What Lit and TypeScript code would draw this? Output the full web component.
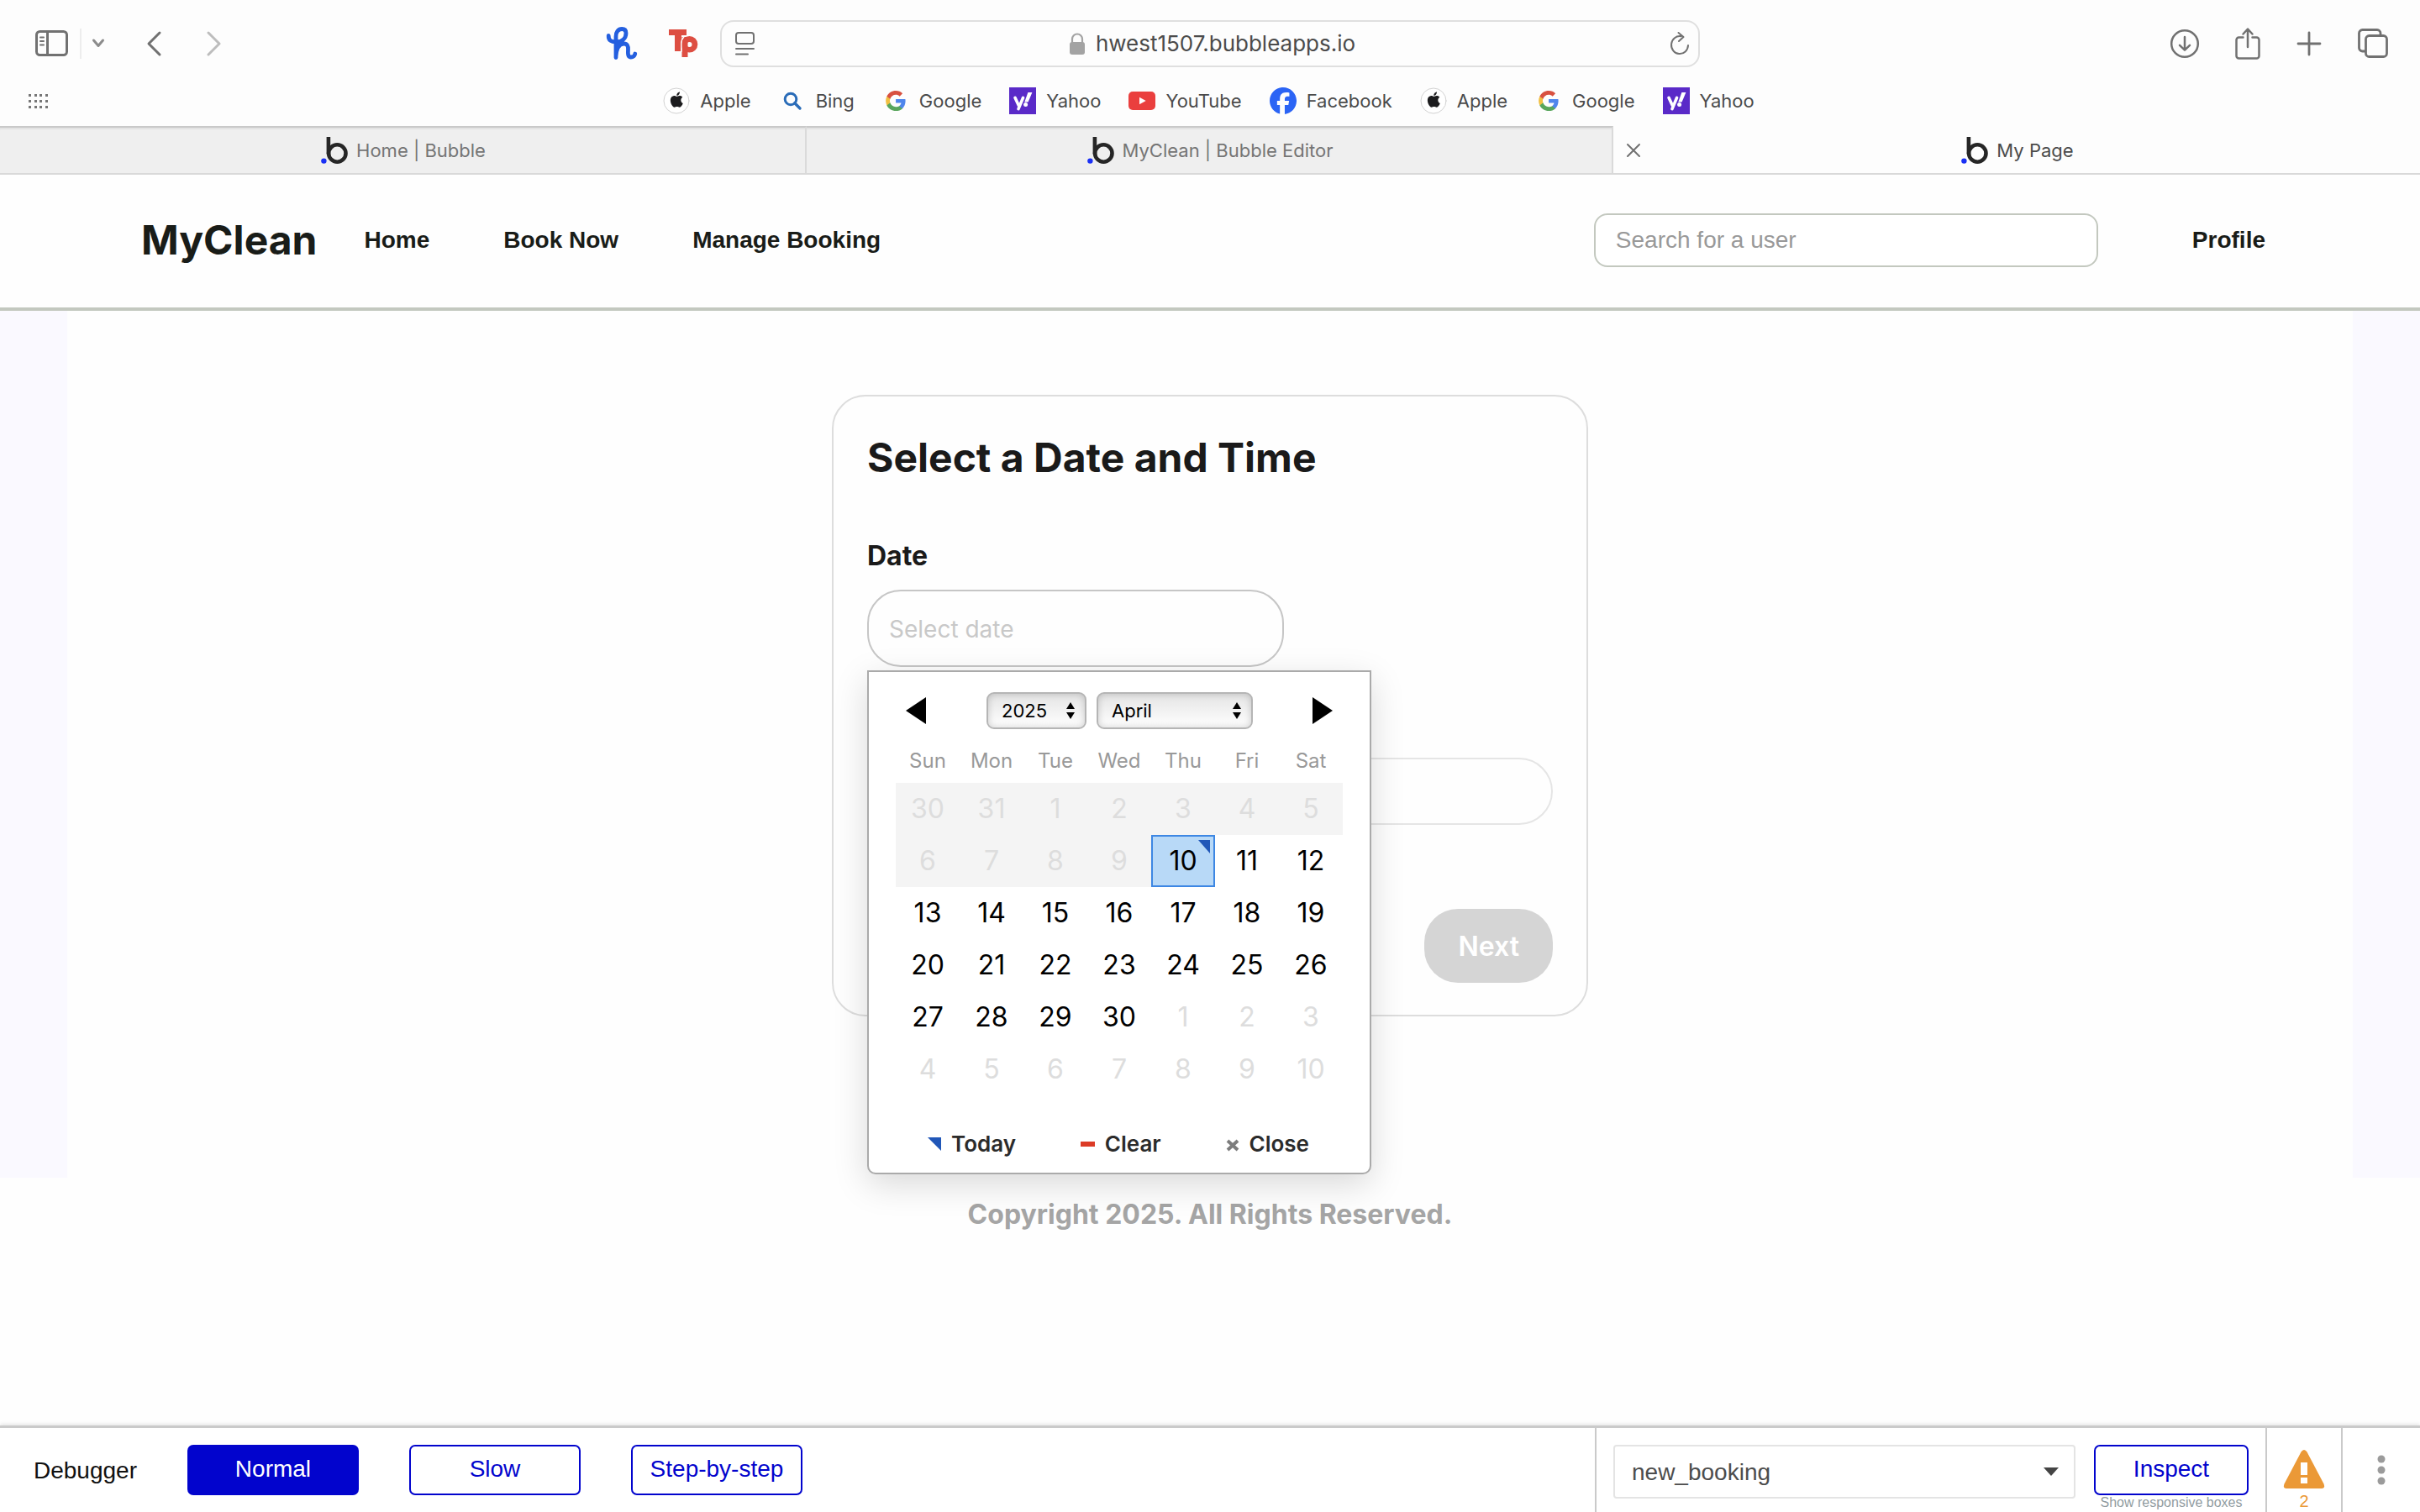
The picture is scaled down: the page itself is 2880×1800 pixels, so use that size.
import { LitElement, html, css, svg, nothing } from "lit";
import { customElement, state } from "lit/decorators.js";
import { classMap } from "lit/directives/class-map.js";

const APPLE = "M12.152 6.896c-.948 0-2.415-1.078-3.96-1.04-2.04.027-3.91 1.183-4.961 3.014-2.117 3.675-.546 9.103 1.519 12.09 1.013 1.454 2.208 3.09 3.792 3.039 1.52-.065 2.09-.987 3.935-.987 1.831 0 2.35.987 3.96.948 1.637-.026 2.676-1.48 3.676-2.948 1.156-1.688 1.636-3.325 1.662-3.415-.039-.013-3.182-1.221-3.22-4.857-.026-3.04 2.48-4.494 2.597-4.559-1.429-2.09-3.623-2.324-4.39-2.376-2-.156-3.675 1.09-4.61 1.09zM15.53 3.83c.843-1.012 1.4-2.427 1.245-3.83-1.207.052-2.662.805-3.532 1.818-.78.896-1.454 2.338-1.273 3.714 1.338.104 2.715-.688 3.559-1.701";
const FACEBOOK = "M9.101 23.691v-7.98H6.627v-3.667h2.474v-1.58c0-4.085 1.848-5.978 5.858-5.978.401 0 .955.042 1.468.103a8.68 8.68 0 0 1 1.141.195v3.325a8.623 8.623 0 0 0-.653-.036 26.805 26.805 0 0 0-.733-.009c-.707 0-1.259.096-1.675.309a1.686 1.686 0 0 0-.679.622c-.258.42-.374.995-.374 1.752v1.297h3.919l-.386 2.103-.287 1.564h-3.246v8.245C19.396 23.238 24 18.179 24 12.044c0-6.627-5.373-12-12-12s-12 5.373-12 12c0 5.628 3.874 10.35 9.101 11.647Z";

const siteIcons: Record<string, unknown> = {
  Apple: svg`<circle cx="16" cy="16" r="15" fill="#fff" stroke="#d2d2d2" stroke-width="1"/><g transform="translate(7.200 5.600) scale(0.76)"><path d=${APPLE} fill="#1c1c1e"/></g>`,
  Bing: svg`<circle cx="14" cy="14" r="6.800" fill="none" stroke="#2a6cb8" stroke-width="3"/><path d="M18.800 18.800L25 25" stroke="#2a6cb8" stroke-width="3.400" stroke-linecap="round"/>`,
  Google: svg`<g transform="translate(3 3) scale(1.090)"><path fill="#4f86ec" d="M22.56 12.25c0-.78-.07-1.53-.2-2.25H12v4.26h5.92c-.26 1.37-1.04 2.53-2.21 3.31v2.77h3.57c2.08-1.92 3.28-4.74 3.28-8.09z"/><path fill="#58a65c" d="M12 23c2.97 0 5.46-.98 7.28-2.66l-3.57-2.77c-.98.66-2.23 1.06-3.71 1.06-2.86 0-5.29-1.93-6.16-4.53H2.18v2.84C3.99 20.53 7.7 23 12 23z"/><path fill="#f1bf42" d="M5.84 14.09c-.22-.66-.35-1.36-.35-2.09s.13-1.43.35-2.09V7.07H2.18C1.43 8.55 1 10.22 1 12s.43 3.45 1.18 4.93l2.85-2.22.81-.62z"/><path fill="#d85140" d="M12 5.38c1.62 0 3.06.56 4.21 1.64l3.15-3.15C17.45 2.09 14.97 1 12 1 7.7 1 3.99 3.47 2.18 7.07l3.66 2.84c.87-2.6 3.3-4.53 6.16-4.53z"/></g>`,
  Yahoo: svg`<rect width="32" height="32" fill="#5a2ac8"/><path d="M7 12.300L11.300 21.600M16.600 12.300L11 25.600" stroke="#fff" stroke-width="3.600" fill="none"/><path d="M22.400 6h5l-4.800 11.500h-4.300z" fill="#fff"/><circle cx="19.600" cy="20.400" r="2.500" fill="#fff"/>`,
  YouTube: svg`<rect y="5" width="32" height="22" rx="5" fill="#ea3f3e"/><path d="M13 11.700v8.600l7.700-4.300z" fill="#fff"/>`,
  Facebook: svg`<g transform="scale(1.334)"><path d=${FACEBOOK} fill="#2b64f5"/></g>`,
};

const bookmarks = ["Apple", "Bing", "Google", "Yahoo", "YouTube", "Facebook", "Apple", "Google", "Yahoo"];

const bubbleMark = html`<svg class="mark" viewBox="0 0 32 32" aria-hidden="true">
  <path d="M8.900 0v20.500" stroke="#262626" stroke-width="4.600" fill="none"/>
  <circle cx="19.300" cy="19.500" r="10.200" fill="none" stroke="#262626" stroke-width="4.600"/>
  <circle cx="3.400" cy="28.600" r="3.200" fill="#1a30f5"/>
</svg>`;

@customElement("browser-chrome")
class BrowserChrome extends LitElement {
  static styles = css`
    :host { display: block; background: #fdfdfd; color: #4b4b4b; font: 22px/32px Inter, sans-serif; }
    button { border: 0; padding: 0; background: none; display: flex; }
    svg { display: block; fill: none; stroke: #717171; stroke-linecap: round; stroke-linejoin: round; }
    a { color: inherit; text-decoration: none; }
    .toolbar { display: grid; grid-template-columns: 1fr minmax(0, 1166px) 1fr; align-items: center; padding-top: 24px; }
    .group { display: flex; align-items: center; }
    .left { padding: 0 26px 0 41px; }
    .divider { width: 2px; height: 36px; margin: 0 12px; background: #ededed; }
    .back { margin-left: 48px; }
    .forward { margin-left: 52px; }
    .extensions { display: flex; gap: 36px; margin-left: auto; }
    .right { justify-content: flex-end; gap: 41px; padding-right: 37px; }
    .address { display: flex; align-items: center; height: 56px; box-sizing: border-box; padding: 0 9px 0 16px; border: 2px solid #dfdfdf; border-radius: 16px; }
    .location { flex: 1; display: flex; align-items: center; justify-content: center; gap: 12px; font-size: 26px; }
    .bookmarks { display: grid; grid-template-columns: 1fr auto 1fr; align-items: center; height: 70px; box-sizing: border-box; padding: 9px 0 0 33px; }
    .bookmarks nav { display: flex; gap: 33px; padding-right: 36px; }
    .bookmark { display: flex; gap: 12px; }
    .site { stroke: none; width: 32px; height: 32px; }
    .tabs { display: grid; grid-template-columns: repeat(3, 1fr); border-bottom: 2px solid #d9d9d9; }
    .tab { display: grid; grid-template-columns: 1fr auto 1fr; align-items: center; height: 56px; box-sizing: border-box; }
    .tab.idle { background: #efefef; color: #757575; border-right: 2px solid #dadada; border-top: 2px solid #c9c9c9; box-shadow: inset 0 3px 3px -2px #00000018; }
    .title { grid-column: 2; display: flex; align-items: center; gap: 10px; padding: 2px 0 0 2px; }
    .idle .title { padding-top: 0; }
    .mark { width: 32px; height: 32px; stroke: none; stroke-linecap: butt; }
    .close { margin-left: 14px; }
  `;

  private tab(title: string, active: boolean) {
    return html`<div class=${classMap({ tab: true, idle: !active })}>
      ${active
        ? html`<button class="close" aria-label="Close tab"><svg width="20" height="22" stroke-width="2"><path d="M3 5L17 19M17 5L3 19"/></svg></button>`
        : nothing}
      <a class="title" href="#">${bubbleMark}<span>${title}</span></a>
    </div>`;
  }

  render() {
    return html`
      <div class="toolbar">
        <div class="group left">
          <button aria-label="Sidebar"><svg width="42" height="34" stroke-width="3"><rect x="2.500" y="2.500" width="36" height="28" rx="4"/><path d="M15.500 3V30"/><path d="M7 9.500h4M7 14h4M7 18.500h4" stroke-width="2"/></svg></button>
          <span class="divider"></span>
          <button aria-label="Tab groups"><svg width="16" height="14" viewBox="0 0 16 14"><path d="M2.500 3l5.500 6.500L13.500 3" stroke="#8c8c8c" stroke-width="3"/></svg></button>
          <button class="back" aria-label="Back"><svg width="20" height="32" stroke-width="3"><path d="M17 3L4 16l13 13"/></svg></button>
          <button class="forward" aria-label="Forward"><svg width="20" height="32" viewBox="0 0 20 32"><path d="M3 3l13 13L3 29" stroke="#bdbdbd" stroke-width="3"/></svg></button>
          <div class="extensions">
            <button aria-label="Honey"><svg width="38" height="40" viewBox="0 0 38 40"><path d="M3.200 10.500C3 16 6.500 18.200 12.500 18c7-.300 11.500-4.500 11.500-10.500 0-3.400-2-5-4.800-5C14.500 2.500 12 6 12 11.500V36.500M12 35c.500-7 3-15 9.500-15 4 0 5.200 3 5 7-.200 3.500-.700 8.800 3 9 3 .200 5-2 5.300-4" stroke="#245fdf" stroke-width="4.800"/></svg></button>
            <button aria-label="Teachers extension"><svg width="36" height="38" viewBox="0 0 36 38" stroke-linejoin="miter"><g stroke="none" fill="#dd4e42"><path d="M1 3h21v7h-6v19H8V10H1z"/><path d="M16.500 12h7v24h-7z"/><path fill-rule="evenodd" d="M25.500 11a9.800 9.800 0 1 1 0 19.600 9.800 9.800 0 0 1 0-19.600zm0 7a3 3 0 1 0 0 6 3 3 0 0 0 0-6z"/></g><path d="M15.800 29.500V20q0-5 3-8" stroke="#fdfdfd" stroke-width="1.500"/></svg></button>
          </div>
        </div>
        <div class="address">
          <button aria-label="Reader"><svg width="24" height="30" stroke-width="2"><rect x="1" y="2" width="21" height="13" rx="3"/><path d="M1 21h21M1 27.500h14"/></svg></button>
          <span class="location"><svg width="20" height="28" viewBox="0 0 20 28"><rect x="1" y="12" width="18" height="15" rx="3" fill="#a3a3a3" stroke="none"/><path d="M4 13V8.500a6 6 0 0 1 12 0V13" stroke="#a3a3a3" stroke-width="2.200"/></svg>hwest1507.bubbleapps.io</span>
          <button aria-label="Reload"><svg width="26" height="30" stroke-width="2"><path d="M14.500 6.200A10 10.500 0 1 0 23 17M11.500 2l6 5-5.500 5"/></svg></button>
        </div>
        <div class="group right">
          <button aria-label="Downloads"><svg width="36" height="36" stroke-width="2.500"><circle cx="18" cy="18" r="15.800"/><path d="M18 10v15.500M12 19.800l6 5.800 6-5.800"/></svg></button>
          <button aria-label="Share"><svg width="32" height="40" stroke-width="2.500"><path d="M10.500 12.500H5.500a3 3 0 0 0-3 3V34.500a3 3 0 0 0 3 3H26.500a3 3 0 0 0 3-3V15.500a3 3 0 0 0-3-3H21.500M16 24V3M10.500 8.500L16 2.500l5.500 6"/></svg></button>
          <button aria-label="New tab"><svg width="32" height="32" stroke-width="2.800"><path d="M16 3v26M3 16h26"/></svg></button>
          <button aria-label="Show tabs"><svg width="38" height="38" stroke-width="2.800"><rect x="10.500" y="9.500" width="25" height="25" rx="4"/><path d="M9 28H6.500a4 4 0 0 1-4-4V6.500a4 4 0 0 1 4-4H24a4 4 0 0 1 4 4V9"/></svg></button>
        </div>
      </div>
      <div class="bookmarks">
        <button aria-label="Favourites"><svg width="26" height="20" viewBox="0 0 26 20">${[2, 9, 16].map((y) => [1, 8, 14, 21].map((x) => svg`<rect x=${x} y=${y} width="3" height="3" fill="#777" stroke="none"/>`))}</svg></button>
        <nav>${bookmarks.map((name) => html`<a class="bookmark" href="#"><svg class="site" viewBox="0 0 32 32" aria-hidden="true">${siteIcons[name]}</svg>${name}</a>`)}</nav>
      </div>
      <div class="tabs">${this.tab("Home | Bubble", false)}${this.tab("MyClean | Bubble Editor", false)}${this.tab("My Page", true)}</div>
    `;
  }
}

@customElement("site-header")
class SiteHeader extends LitElement {
  static styles = css`
    :host { display: flex; align-items: center; height: 156px; padding: 0 184px 2px 168px; border-bottom: 4px solid #c3c8bf; background: #fefefe; font: bold 28px/34px "Liberation Sans", sans-serif; color: #191c18; }
    a { color: inherit; text-decoration: none; }
    .brand { font: 700 48px/58px Inter, sans-serif; margin-right: 56px; }
    nav { display: flex; gap: 88px; }
    .search { flex: 0 1 600px; height: 64px; box-sizing: border-box; margin: 0 112px 0 auto; padding: 0 24px; border: 2px solid #c3c8bf; border-radius: 16px; background: #fff; font: 28px "Liberation Sans", sans-serif; }
    .search::placeholder { color: #999; opacity: 1; }
  `;
  render() {
    return html`
      <a class="brand" href="#">MyClean</a>
      <nav><a href="#">Home</a><a href="#">Book Now</a><a href="#">Manage Booking</a></nav>
      <input class="search" type="search" placeholder="Search for a user" aria-label="Search for a user">
      <a href="#">Profile</a>
    `;
  }
}

const MONTHS = ["January", "February", "March", "April", "May", "June", "July", "August", "September", "October", "November", "December"];
const WEEKDAYS = ["Sun", "Mon", "Tue", "Wed", "Thu", "Fri", "Sat"];
const TODAY = new Date(2025, 3, 10);

@customElement("date-picker")
class DatePicker extends LitElement {
  @state() private year = 2025;
  @state() private month = 3;

  static styles = css`
    :host { display: block; box-sizing: border-box; width: 600px; padding: 24px 32px 14px; border: 2px solid #aaa; border-radius: 0 0 10px 10px; background: #fff; box-shadow: 0 12px 40px #00000026; font: 32px/40px Inter, sans-serif; color: #000; }
    button { border: 0; padding: 0; background: none; color: inherit; font: inherit; }
    svg { display: block; }
    .head { display: flex; align-items: center; gap: 12px; padding: 0 12px; }
    .next { margin-left: auto; }
    .year { margin-left: 60px; width: 119px; }
    .month { width: 186px; }
    .picker { position: relative; display: flex; }
    .picker select { appearance: none; width: 100%; height: 44px; padding: 0 16px; border: 2px solid #b5b5b5; border-radius: 9px; background: linear-gradient(#e4e4e4, #fff); box-shadow: inset 0 0 8px #00000030; color: #000; font: 22px Inter, sans-serif; }
    .picker svg { position: absolute; right: 13px; top: 12px; pointer-events: none; }
    table { width: 532px; margin-top: 16px; border-collapse: collapse; table-layout: fixed; }
    th { height: 44px; padding: 0 0 4px; font-size: 24px; font-weight: 400; line-height: 40px; color: #999; }
    td { padding: 0; }
    .day { position: relative; display: block; width: 100%; height: 62px; box-sizing: border-box; }
    .off { color: #ddd; }
    .past { background: #f4f4f4; }
    .today { background: #b8d9f7; border: 2px solid #3d87e3; }
    .today::after { content: ""; position: absolute; top: 4px; right: 4px; border-top: 16px solid #2157b8; border-left: 14px solid transparent; }
    .actions { display: flex; justify-content: space-between; padding: 0 40px 0 38px; margin-top: 38px; }
    .action { display: flex; align-items: center; gap: 12px; font-size: 26px; font-weight: 600; line-height: 40px; color: #2b2b2b; }
  `;

  private shift(step: number) {
    const next = new Date(this.year, this.month + step, 1);
    this.year = next.getFullYear();
    this.month = next.getMonth();
  }

  private weeks() {
    const lead = new Date(this.year, this.month, 1).getDay();
    return Array.from({ length: 6 }, (_, w) => Array.from({ length: 7 }, (_, d) => new Date(this.year, this.month, 1 - lead + w * 7 + d)));
  }

  private cell(date: Date) {
    const past = date < TODAY;
    const off = past || date.getMonth() !== this.month;
    const today = date.getTime() === TODAY.getTime();
    return html`<td><button class=${classMap({ day: true, past, off, today })} ?disabled=${off}>${date.getDate()}</button></td>`;
  }

  render() {
    const arrows = html`<svg width="12" height="20" viewBox="0 0 12 20" aria-hidden="true"><path d="M6 0l5 8H1zM6 20l5-8H1z"/></svg>`;
    return html`
      <div class="head">
        <button aria-label="Previous month" @click=${() => this.shift(-1)}><svg width="24" height="32"><path d="M24 0v32L0 16z"/></svg></button>
        <span class="picker year"><select aria-label="Year" @change=${(e: Event) => (this.year = +(e.target as HTMLSelectElement).value)}>${[2025, 2026, 2027].map((y) => html`<option ?selected=${y === this.year}>${y}</option>`)}</select>${arrows}</span>
        <span class="picker month"><select aria-label="Month" @change=${(e: Event) => (this.month = (e.target as HTMLSelectElement).selectedIndex)}>${MONTHS.map((m, i) => html`<option ?selected=${i === this.month}>${m}</option>`)}</select>${arrows}</span>
        <button class="next" aria-label="Next month" @click=${() => this.shift(1)}><svg width="24" height="32"><path d="M0 0v32l24-16z"/></svg></button>
      </div>
      <table>
        <thead><tr>${WEEKDAYS.map((d) => html`<th scope="col">${d}</th>`)}</tr></thead>
        <tbody>${this.weeks().map((week) => html`<tr>${week.map((d) => this.cell(d))}</tr>`)}</tbody>
      </table>
      <div class="actions">
        <button class="action"><svg width="16" height="20"><path d="M0 2h16v16z" fill="#2157b8"/></svg>Today</button>
        <button class="action"><svg width="17" height="20"><path d="M0 7h17v6H0z" fill="#dc3b26"/></svg>Clear</button>
        <button class="action"><svg width="16" height="20"><path d="M2 6l12 11M14 6L2 17" stroke="#7d7d7d" stroke-width="4"/></svg>Close</button>
      </div>
    `;
  }
}

@customElement("debugger-bar")
class DebuggerBar extends LitElement {
  static styles = css`
    :host { display: flex; height: 100px; border-top: 3px solid #cacaca; box-shadow: 0 -2px 4px #00000018; background: #fff; font: 28px/32px "Liberation Sans", sans-serif; color: #111; }
    svg { display: block; }
    button { font: inherit; }
    .speeds { flex: 1; display: flex; align-items: flex-start; gap: 60px; padding: 20px 0 0 40px; }
    .name { line-height: 62px; }
    .btn { width: 204px; height: 60px; padding: 0 0 3px; border: 2px solid #0204cd; border-radius: 7px; background: #fff; color: #0204cd; }
    .btn.on { background: #0204cd; color: #fff; }
    .inspect { display: flex; align-items: flex-start; gap: 22px; padding: 20px 20px 0; border-left: 2px solid #cacaca; }
    .element { position: relative; display: flex; width: 550px; }
    .element select { appearance: none; width: 100%; height: 64px; padding: 2px 20px 0; border: 2px solid #e4e4e4; border-radius: 4px; background: #fff; color: #4d4d4d; font: inherit; }
    .element svg { position: absolute; right: 20px; top: 27px; pointer-events: none; }
    .stack { display: flex; flex-direction: column; align-items: center; }
    .stack .btn { width: 184px; }
    .hint { font-size: 16px; line-height: 18px; color: #919ca1; }
    .issues { width: 92px; box-sizing: border-box; padding: 25px 0 0; border: 0; border-left: 2px solid #cacaca; border-right: 2px solid #cacaca; background: none; display: flex; flex-direction: column; align-items: center; gap: 3px; font-size: 20px; line-height: 22px; color: #eb9937; }
    .more { width: 92px; padding: 32px 0 0; border: 0; background: none; display: flex; justify-content: center; align-items: flex-start; }
  `;
  render() {
    return html`
      <div class="speeds">
        <span class="name">Debugger</span>
        <button class="btn on">Normal</button><button class="btn">Slow</button><button class="btn">Step-by-step</button>
      </div>
      <div class="inspect">
        <span class="element"><select aria-label="Element"><option>new_booking</option></select><svg width="18" height="10"><path d="M0 0h18L9 10z" fill="#444"/></svg></span>
        <div class="stack"><button class="btn">Inspect</button><a class="hint">Show responsive boxes</a></div>
      </div>
      <button class="issues"><svg width="50" height="48" viewBox="0 0 50 48"><path d="M25 1q2 0 3.500 2.500l20 38Q50.500 47 46 47H4Q-.500 47 1.500 41.500l20-38Q23 1 25 1z" fill="#eb9937"/><path d="M21 16h8v15h-8zM21 34h8v7h-8z" fill="#fff"/></svg>2</button>
      <button class="more" aria-label="More"><svg width="10" height="36" fill="#9b9b9b"><circle cx="5" cy="5" r="4.500"/><circle cx="5" cy="18" r="4.500"/><circle cx="5" cy="31" r="4.500"/></svg></button>
    `;
  }
}

@customElement("app-root")
class AppRoot extends LitElement {
  static styles = css`
    :host { display: flex; flex-direction: column; min-height: 100vh; background: #fefefe; font: 32px/40px Inter, sans-serif; color: #1a1a1a; }
    main { padding: 0 80px; background: #faf9ff; }
    .page { display: flex; justify-content: center; padding: 100px 0 192px; background: #fefefe; }
    .card { display: flex; flex-direction: column; width: 900px; box-sizing: border-box; padding: 44px 40px 38px; border: 2px solid #ddd; border-radius: 40px; }
    h1 { margin: 0 0 68px; font-size: 48px; font-weight: 700; line-height: 58px; }
    label { font-weight: 700; }
    .field { position: relative; display: flex; margin-top: 20px; }
    .date { width: 496px; height: 92px; box-sizing: border-box; padding: 2px 24px 0; border: 2px solid #c6c6c6; border-radius: 40px; background: none; font: 28px Inter, sans-serif; }
    .date::placeholder { color: #c8c8c8; opacity: 1; }
    date-picker { position: absolute; z-index: 1; top: calc(100% + 4px); left: 0; }
    .time { height: 80px; box-sizing: border-box; margin-top: 108px; padding: 0 24px; border: 2px solid #e5e5e5; border-radius: 40px; background: none; font: 28px Inter, sans-serif; }
    .next { align-self: flex-end; height: 88px; margin-top: 100px; padding: 0 40px; border: 0; border-radius: 40px; background: #d5d5d5; color: #fff; font: 600 32px Inter, sans-serif; }
    footer { padding: 24px 0; text-align: center; font-weight: 700; color: #a5a5a5; }
    debugger-bar { margin-top: auto; }
  `;
  render() {
    return html`
      <browser-chrome></browser-chrome>
      <site-header></site-header>
      <main><div class="page">
        <form class="card">
          <h1>Select a Date and Time</h1>
          <label for="date">Date</label>
          <div class="field"><input id="date" class="date" type="text" placeholder="Select date"><date-picker></date-picker></div>
          <input class="time" type="text" aria-label="Time">
          <button class="next" type="button">Next</button>
        </form>
      </div></main>
      <footer>Copyright 2025. All Rights Reserved.</footer>
      <debugger-bar></debugger-bar>
    `;
  }
}
